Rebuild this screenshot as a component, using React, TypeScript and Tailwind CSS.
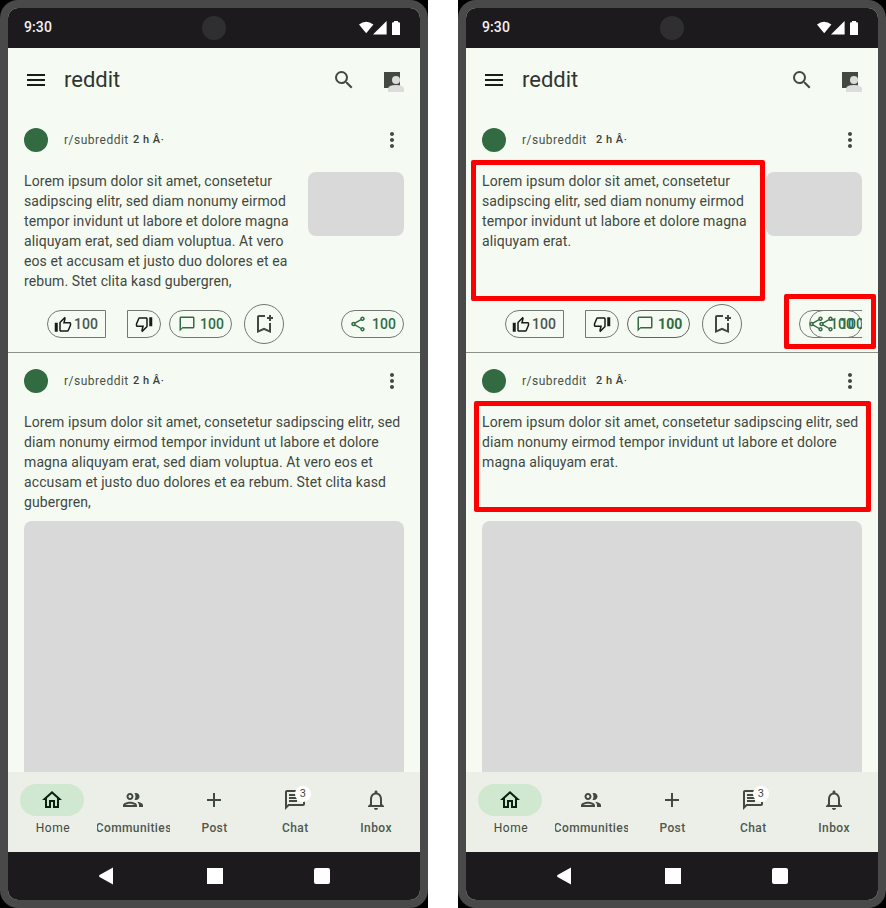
import React from "react";
import {
  MdMenu, MdSearch, MdMoreVert, MdOutlineHome, MdOutlineGroup, MdAdd, MdOutlineChat,
  MdNotificationsNone, MdOutlineBookmarkAdd, MdOutlineShare, MdChatBubbleOutline,
  MdOutlineThumbUp, MdOutlineThumbDown,
} from "react-icons/md";

type Variant = "original" | "short";

function StatusBar() {
  return (
    <div className="relative flex h-10 shrink-0 items-center justify-between bg-[#1d1a1e] pl-4 pr-[19px]">
      <span className="-mt-0.5 text-sm font-medium leading-5 tracking-[0.1px] text-[#f4eff4]">9:30</span>
      <div className="absolute left-[194px] top-2 size-6 rounded-full bg-[#2f2f31]" />
      <svg className="h-4 w-[42px]" viewBox="0 0 42 16" fill="#fff">
        <path d="M0 4.6Q7 -1 14.4 4.6L7.2 13.2Z" />
        <path d="M14 14.5L27.6 1V14.5Z" />
        <path d="M33 3.2Q33 2.2 34 2.2H35V1H39V2.2H40Q41 2.2 41 3.2V15H33Z" />
      </svg>
    </div>
  );
}

function AppBar() {
  return (
    <header className="flex h-16 shrink-0 items-center pl-4 pr-4">
      <MdMenu className="size-6 text-[#171d17]" />
      <h1 className="ml-4 text-[22px] font-normal leading-7 text-[#2f352f]">reddit</h1>
      <MdSearch className="ml-auto size-6 text-[#414941]" />
      <svg className="ml-6 h-6 w-6" viewBox="0 0 24 24">
        <path d="M4 4h16v16H4z" fill="#414941" />
        <circle cx="16" cy="12" r="4" fill="#dcdcdc" />
        <path d="M8 24v-3q0-4 8-4t8 4v3z" fill="#dcdcdc" />
      </svg>
    </header>
  );
}

function PostHeader({ variant }: { variant: Variant }) {
  return (
    <div className="flex h-14 shrink-0 items-center px-4">
      <div className="size-6 rounded-full bg-[#326b41]" />
      <span className="ml-4 w-[65px] whitespace-nowrap text-xs leading-4 tracking-[0.5px] text-[#495049]">r/subreddit</span>
      <span
        className={
          variant === "original"
            ? "-mt-px ml-1 text-[11px] font-medium leading-4 tracking-[0.5px] text-[#3a403a]"
            : "-mt-px ml-[9px] text-[11px] font-medium leading-4 tracking-[0.5px] text-[#3a403a]"
        }
      >
        2 h Â·
      </span>
      <MdMoreVert className="ml-auto size-6 text-[#414941]" />
    </div>
  );
}

function Actions({ variant }: { variant: Variant }) {
  const short = variant === "short";
  return (
    <div className="flex h-10 items-center pl-[39px] pr-4 text-sm font-medium leading-5 tracking-[0.1px]">
      <div className="flex h-7 w-[59px] items-center rounded-l-full border border-[#727970] pl-1.5 text-[#4d544c]">
        <MdOutlineThumbUp className="mt-0.5 size-[18px] text-[#171d17]" />
        <span className="ml-0.5 tracking-normal">100</span>
      </div>
      <div className="ml-[21px] flex h-7 w-[34px] items-center rounded-r-full border border-[#727970] pl-[7px] text-[#171d17]">
        <MdOutlineThumbDown className="size-[18px]" />
      </div>
      <div
        className={
          short
            ? "ml-2 flex h-7 w-[63px] items-center rounded-full border-[1.5px] border-[#5d655c] pl-2 font-bold text-[#326b41]"
            : "ml-2 flex h-7 w-[63px] items-center rounded-full border border-[#727970] pl-2 text-[#326b41]"
        }
      >
        <MdChatBubbleOutline className="size-[18px]" />
        <span className="ml-1">100</span>
      </div>
      <div className="ml-3 flex size-10 items-center justify-center rounded-full border border-[#727970] text-[#414941]">
        <MdOutlineBookmarkAdd className="mr-px size-6" />
      </div>
      {short ? (
        <div className="relative ml-auto h-7 w-[63px] overflow-hidden text-[#326b41]">
          <div className="flex h-7 w-[80px] items-center rounded-full border border-[#727970] pl-[7px]">
            <MdOutlineShare className="size-[18px]" />
            <span className="ml-[5px]">100</span>
          </div>
          <div className="absolute left-[10px] top-0 flex h-7 w-[53px] items-center rounded-full border border-[#727970] pl-[7px]">
            <MdOutlineShare className="size-[18px] shrink-0" />
            <span className="ml-[5px]">100</span>
          </div>
        </div>
      ) : (
        <div className="ml-auto flex h-7 w-[63px] items-center rounded-full border border-[#727970] pl-[7px] text-[#326b41]">
          <MdOutlineShare className="size-[18px]" />
          <span className="ml-[5px]">100</span>
        </div>
      )}
    </div>
  );
}

const FIRST: Record<Variant, string[]> = {
  original: [
    "Lorem ipsum dolor sit amet, consetetur",
    "sadipscing elitr, sed diam nonumy eirmod",
    "tempor invidunt ut labore et dolore magna",
    "aliquyam erat, sed diam voluptua. At vero",
    "eos et accusam et justo duo dolores et ea",
    "rebum. Stet clita kasd gubergren,",
  ],
  short: [
    "Lorem ipsum dolor sit amet, consetetur",
    "sadipscing elitr, sed diam nonumy eirmod",
    "tempor invidunt ut labore et dolore magna",
    "aliquyam erat.",
  ],
};

const SECOND: Record<Variant, string[]> = {
  original: [
    "Lorem ipsum dolor sit amet, consetetur sadipscing elitr, sed",
    "diam nonumy eirmod tempor invidunt ut labore et dolore",
    "magna aliquyam erat, sed diam voluptua. At vero eos et",
    "accusam et justo duo dolores et ea rebum. Stet clita kasd",
    "gubergren,",
  ],
  short: [
    "Lorem ipsum dolor sit amet, consetetur sadipscing elitr, sed",
    "diam nonumy eirmod tempor invidunt ut labore et dolore",
    "magna aliquyam erat.",
  ],
};

function Copy({ lines }: { lines: string[] }) {
  return (
    <div className="whitespace-nowrap text-sm leading-5 tracking-[0.1px] text-[#414741]">
      {lines.map((line) => (
        <p key={line}>{line}</p>
      ))}
    </div>
  );
}

function BottomNav() {
  const items = [
    { label: "Communities", icon: <MdOutlineGroup className="size-6" /> },
    { label: "Post", icon: <MdAdd className="size-6" /> },
    { label: "Chat", icon: <MdOutlineChat className="size-6" />, badge: "3" },
    { label: "Inbox", icon: <MdNotificationsNone className="size-6" /> },
  ];
  return (
    <nav className="flex h-20 shrink-0 gap-2 bg-[#ebefe7] px-2 pt-3 text-xs font-medium leading-4 tracking-[0.4px] text-[#414941]">
      <div className="flex min-w-0 flex-1 flex-col items-center gap-1">
        <div className="flex h-8 w-16 items-center justify-center rounded-full bg-[#d0e8d0] text-[#0b2011]">
          <MdOutlineHome className="size-6" />
        </div>
        <span className="pl-px font-normal tracking-[0.5px]">Home</span>
      </div>
      {items.map((item) => (
        <div key={item.label} className="flex min-w-0 flex-1 flex-col items-center gap-1">
          <div className="relative flex h-8 w-16 items-center justify-center">
            {item.icon}
            {item.badge && (
              <span className="absolute left-8 top-0.5 flex size-4 items-center justify-center rounded-full bg-white text-[11px] font-normal tracking-normal">
                {item.badge}
              </span>
            )}
          </div>
          <div className="flex w-full justify-center overflow-hidden text-[#50574f]">
            <span className="pl-px">{item.label}</span>
          </div>
        </div>
      ))}
    </nav>
  );
}

function SystemNav() {
  return (
    <div className="flex h-12 shrink-0 items-center bg-[#1d1a1e] pl-[90px]">
      <svg className="h-[18px] w-4" viewBox="0 0 16 18" fill="#fff">
        <path d="M15 .5v17L1.5 10Q.5 9 1.5 8Z" />
      </svg>
      <div className="ml-[93px] size-4 bg-white" />
      <div className="ml-[91px] size-4 rounded-[2px] bg-white" />
    </div>
  );
}

function Phone({ variant }: { variant: Variant }) {
  return (
    <div className="w-[428px] bg-black">
      <div className="h-[908px] rounded-[18px] bg-[#494949] p-2">
        <div className="flex h-[892px] flex-col overflow-hidden rounded-[10px] bg-[#f5fbf2]">
          <StatusBar />
          <AppBar />
          <main className="flex min-h-0 flex-1 flex-col overflow-hidden">
            <article className="flex h-[241px] shrink-0 flex-col border-b border-[#8b9289]">
              <PostHeader variant={variant} />
              <div className="flex h-[136px] shrink-0 justify-between px-4 pt-[3px]">
                <Copy lines={FIRST[variant]} />
                <div className="mt-px h-16 w-24 rounded-lg bg-[#d9d9d9]" />
              </div>
              <Actions variant={variant} />
            </article>
            <article className="flex min-h-0 flex-1 flex-col">
              <PostHeader variant={variant} />
              <div className="h-[112px] shrink-0 px-4 pt-[3px]">
                <Copy lines={SECOND[variant]} />
              </div>
              <div className="mx-4 min-h-0 flex-1 rounded-t-lg bg-[#d9d9d9]" />
            </article>
          </main>
          <BottomNav />
          <SystemNav />
        </div>
      </div>
    </div>
  );
}

export default function App() {
  return (
    <div className="relative flex h-[908px] w-[886px] justify-between overflow-hidden bg-white font-[Roboto,sans-serif]">
      <Phone variant="original" />
      <Phone variant="short" />
      <div className="absolute left-[471px] top-[160px] h-[141px] w-[294px] rounded-[2px] border-[5px] border-[#fe0000]" />
      <div className="absolute left-[784px] top-[294px] h-[55px] w-[92px] rounded-[2px] border-[5px] border-[#fe0000]" />
      <div className="absolute left-[474px] top-[401px] h-[111px] w-[397px] rounded-[2px] border-[5px] border-[#fe0000]" />
    </div>
  );
}
